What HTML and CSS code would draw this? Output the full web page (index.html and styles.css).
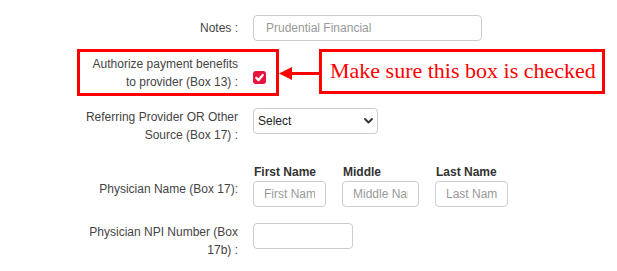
FILE: index.html
```html
<!DOCTYPE html>
<html lang="en">
<head>
  <meta charset="UTF-8" />
  <title>Claim Form - Provider Details</title>
  <link rel="stylesheet" href="styles.css">
</head>
<body>

  <div class="form">

    <!-- Notes -->
    <div class="row row-notes">
      <label class="lbl">Notes :</label>
      <input type="text" class="field notes" placeholder="Prudential Financial">
    </div>

    <!-- Authorize payment (with callout) -->
    <div class="row row-callout">
      <div class="highlight">
        <label class="lbl">Authorize payment benefits to provider (Box 13) :</label>
        <span class="check">
          <svg width="13" height="13" viewBox="0 0 13 13">
            <path d="M3.3 6.9 L5.6 9.1 L9.8 4.1" fill="none" stroke="#fff" stroke-width="2.4" stroke-linecap="round" stroke-linejoin="round"/>
          </svg>
        </span>
      </div>
      <svg class="arrow" width="40" height="47" viewBox="0 0 40 47">
        <polygon points="0,24.5 13,18 13,31" fill="#f00"/>
        <rect x="11" y="23" width="29" height="3" fill="#f00"/>
      </svg>
      <div class="callout">Make sure this box is checked</div>
    </div>

    <!-- Referring provider -->
    <div class="row row-top row-referring">
      <label class="lbl">Referring Provider OR Other Source (Box 17) :</label>
      <span class="select-wrap">
        <select class="field select">
          <option>Select</option>
        </select>
        <svg class="chevron" width="9" height="6" viewBox="0 0 9 6">
          <path d="M1 1 L4.5 4.5 L8 1" fill="none" stroke="#333" stroke-width="1.8" stroke-linecap="round" stroke-linejoin="round"/>
        </svg>
      </span>
    </div>

    <!-- Physician name -->
    <div class="row row-top row-name">
      <label class="lbl">Physician Name (Box 17):</label>
      <div class="name-group">
        <div class="name-col">
          <div class="name-head">First Name</div>
          <input type="text" class="field name-first" placeholder="First Name">
        </div>
        <div class="name-col">
          <div class="name-head">Middle</div>
          <input type="text" class="field name-middle" placeholder="Middle Name">
        </div>
        <div class="name-col">
          <div class="name-head">Last Name</div>
          <input type="text" class="field name-last" placeholder="Last Name">
        </div>
      </div>
    </div>

    <!-- NPI -->
    <div class="row row-top row-npi">
      <label class="lbl">Physician NPI Number (Box 17b) :</label>
      <input type="text" class="field npi">
    </div>

  </div>

</body>
</html>
```

FILE: styles.css
```css
body {
  font-family: "Liberation Sans", Arial, sans-serif;
  font-size: 12px;
  background: #fff;
  color: #444;
  margin: 0;
  padding: 0;
}

.form {
  padding: 15px 0 0 84px;
}

.row {
  display: flex;
  align-items: center;
  gap: 15px;
}

.row-top {
  align-items: flex-start;
}

.lbl {
  width: 154px;
  flex: none;
  text-align: right;
  line-height: 18px;
  color: #444;
}

.field {
  box-sizing: border-box;
  height: 26px;
  border: 1px solid #ccc;
  border-radius: 4px;
  background: #fff;
  font-family: inherit;
  font-size: 12px;
  color: #333;
  padding: 0 10px;
  outline: none;
}

.field::placeholder {
  color: #999;
}

.notes {
  width: 229px;
  padding-left: 12px;
}

/* highlighted row */
.row-callout {
  margin-top: 8px;
  gap: 0;
  align-items: flex-start;
}

.highlight {
  display: flex;
  gap: 15px;
  box-sizing: border-box;
  width: 202px;
  height: 47px;
  margin-left: -7px;
  padding: 3px 0 0 4px;
  border: 3px solid #f00;
}

.check {
  align-self: flex-end;
  margin-bottom: 9px;
  width: 13px;
  height: 13px;
  border-radius: 3px;
  background: #e8123c;
  display: flex;
}

.arrow {
  display: block;
  flex: none;
}

.callout {
  box-sizing: border-box;
  width: 286px;
  height: 45px;
  padding: 0 8px;
  border: 3px solid #f00;
  font-family: "Liberation Serif", "Times New Roman", serif;
  font-size: 22px;
  line-height: 38px;
  color: #f00;
  white-space: nowrap;
}

/* referring */
.row-referring {
  margin-top: 12px;
}

.row-referring .lbl {
  margin-top: 0;
}

.select-wrap {
  position: relative;
  display: inline-block;
}

.select {
  width: 125px;
  padding: 0 4px;
  appearance: none;
  -webkit-appearance: none;
  color: #222;
}

.chevron {
  position: absolute;
  right: 5px;
  top: 10px;
  pointer-events: none;
}

/* physician name */
.row-name {
  margin-top: 20px;
}

.row-name .lbl {
  margin-top: 16px;
}

.name-group {
  display: flex;
  gap: 16px;
}

.name-head {
  font-weight: bold;
  color: #333;
  line-height: 16px;
  margin: 0 0 1px 1px;
}

.name-first,
.name-last {
  width: 73px;
}

.name-middle {
  width: 77px;
}

/* npi */
.row-npi {
  margin-top: 16px;
}

.row-npi .lbl {
  margin-top: 0;
}

.npi {
  width: 100px;
}
```
